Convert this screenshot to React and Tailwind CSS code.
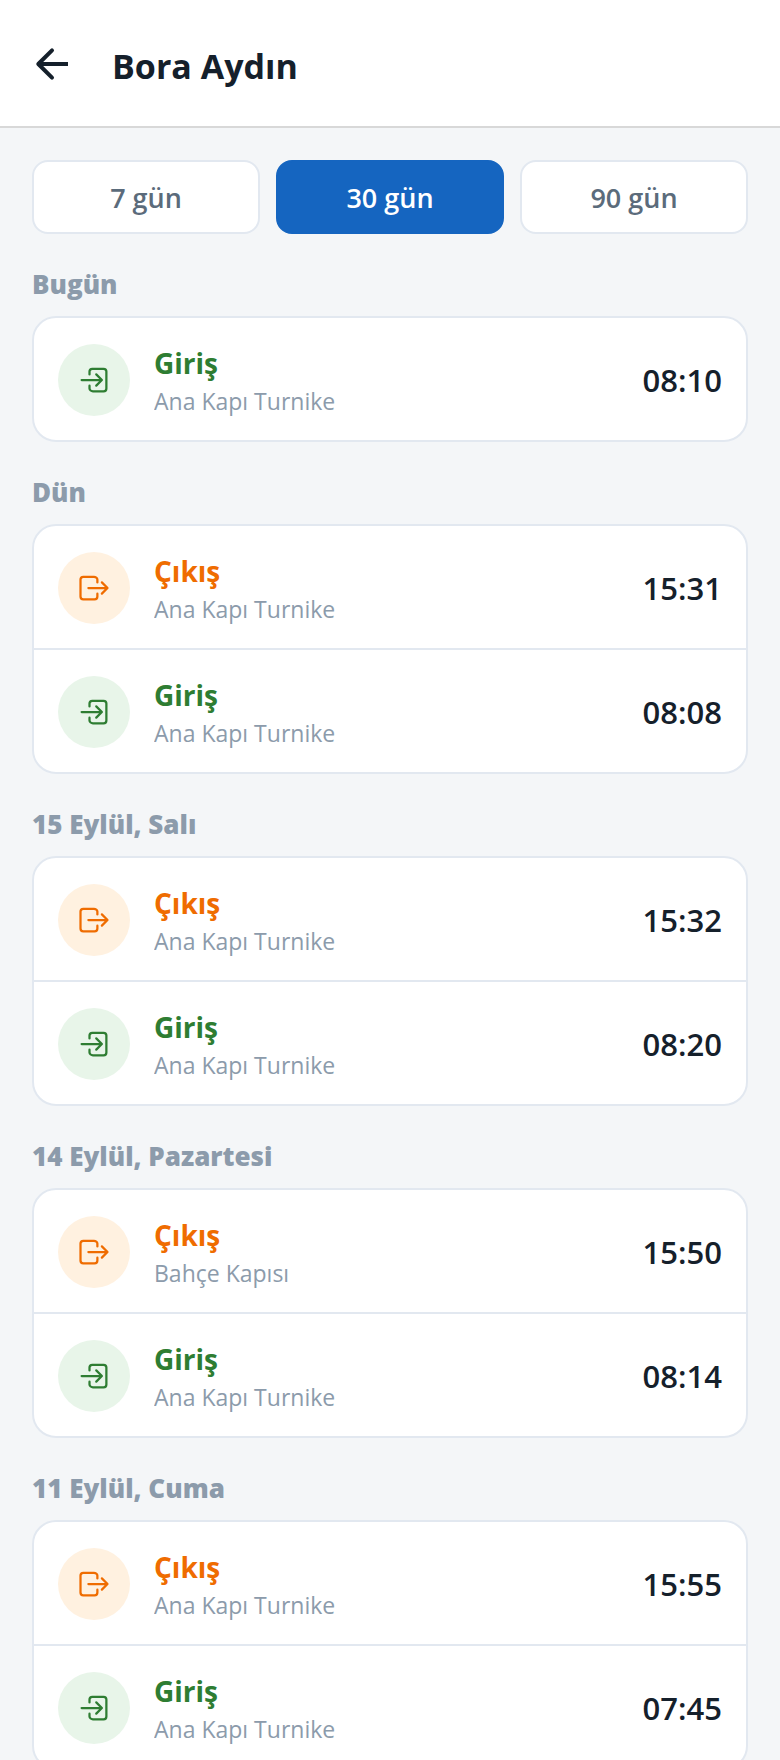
import React, { useState } from 'react';
import { IoLogInOutline, IoLogOutOutline } from 'react-icons/io5';

const RANGES = [7, 30, 90];

const DAYS = [
  { title: 'Bugün', events: [
    { type: 'in', place: 'Ana Kapı Turnike', time: '08:10' },
  ] },
  { title: 'Dün', events: [
    { type: 'out', place: 'Ana Kapı Turnike', time: '15:31' },
    { type: 'in', place: 'Ana Kapı Turnike', time: '08:08' },
  ] },
  { title: '15 Eylül, Salı', events: [
    { type: 'out', place: 'Ana Kapı Turnike', time: '15:32' },
    { type: 'in', place: 'Ana Kapı Turnike', time: '08:20' },
  ] },
  { title: '14 Eylül, Pazartesi', events: [
    { type: 'out', place: 'Bahçe Kapısı', time: '15:50' },
    { type: 'in', place: 'Ana Kapı Turnike', time: '08:14' },
  ] },
  { title: '11 Eylül, Cuma', events: [
    { type: 'out', place: 'Ana Kapı Turnike', time: '15:55' },
    { type: 'in', place: 'Ana Kapı Turnike', time: '07:45' },
  ] },
];

function BackArrow() {
  return (
    <svg viewBox="0 0 24 24" fill="none" stroke="currentColor" strokeWidth="2" className="size-12" aria-hidden="true">
      <path d="M12 5.15L5.15 12L12 18.85" strokeLinecap="round" strokeLinejoin="round" />
      <path d="M5.5 12H20" />
    </svg>
  );
}

function EventRow({ event }) {
  const isIn = event.type === 'in';
  const Icon = isIn ? IoLogInOutline : IoLogOutOutline;

  return (
    <li className="flex items-center gap-6 px-6 pt-[25px] pb-[23px]">
      <div className={`flex size-[72px] shrink-0 items-center justify-center rounded-full ${isIn ? 'bg-[#e8f5e9] text-[#2e7d32]' : 'bg-[#fff1e0] text-[#ef6c00]'}`}>
        <Icon size={36} />
      </div>
      <div className="min-w-0 flex-1">
        <p className={`text-[28px] leading-10 font-bold ${isIn ? 'text-[#2e7d32]' : 'text-[#ef6c00]'}`}>
          {isIn ? 'Giriş' : 'Çıkış'}
        </p>
        <p className="mt-0.5 truncate text-[23px] leading-8 text-[#8c9bab]">{event.place}</p>
      </div>
      <time className="text-[31px] leading-10 font-semibold text-[#15202b]">{event.time}</time>
    </li>
  );
}

export default function App() {
  const [range, setRange] = useState(30);

  return (
    <div className="min-h-screen bg-[#f4f6f8] font-['Open_Sans','Noto_Sans',sans-serif]">
      <header className="flex items-center gap-9 border-b-2 border-[#d8d8d8] bg-white px-7 pt-10 pb-[38px]">
        <button type="button" aria-label="Geri" className="text-[#15202b]">
          <BackArrow />
        </button>
        <h1 className="pt-1 text-[34px] leading-11 font-bold text-[#15202b]">Bora Aydın</h1>
      </header>

      <main className="px-8 pt-8 pb-8">
        <div className="flex gap-4">
          {RANGES.map((days) => (
            <button
              key={days}
              type="button"
              aria-pressed={range === days}
              onClick={() => setRange(days)}
              className={`flex-1 rounded-2xl border-2 pt-[17px] pb-[15px] text-[27px] leading-[38px] font-semibold ${range === days ? 'border-[#1565c0] bg-[#1565c0] text-white' : 'border-[#e2e8f0] bg-white text-[#5b6b7b]'}`}
            >
              {days} gün
            </button>
          ))}
        </div>

        {DAYS.map((day) => (
          <section key={day.title} className="pt-8">
            <h2 className="mb-3.5 text-[26px] leading-9 font-extrabold text-[#8c9bab]">{day.title}</h2>
            <ul className="divide-y-2 divide-[#e2e8f0] rounded-3xl border-2 border-[#e2e8f0] bg-white">
              {day.events.map((event) => (
                <EventRow key={event.time} event={event} />
              ))}
            </ul>
          </section>
        ))}
      </main>
    </div>
  );
}
